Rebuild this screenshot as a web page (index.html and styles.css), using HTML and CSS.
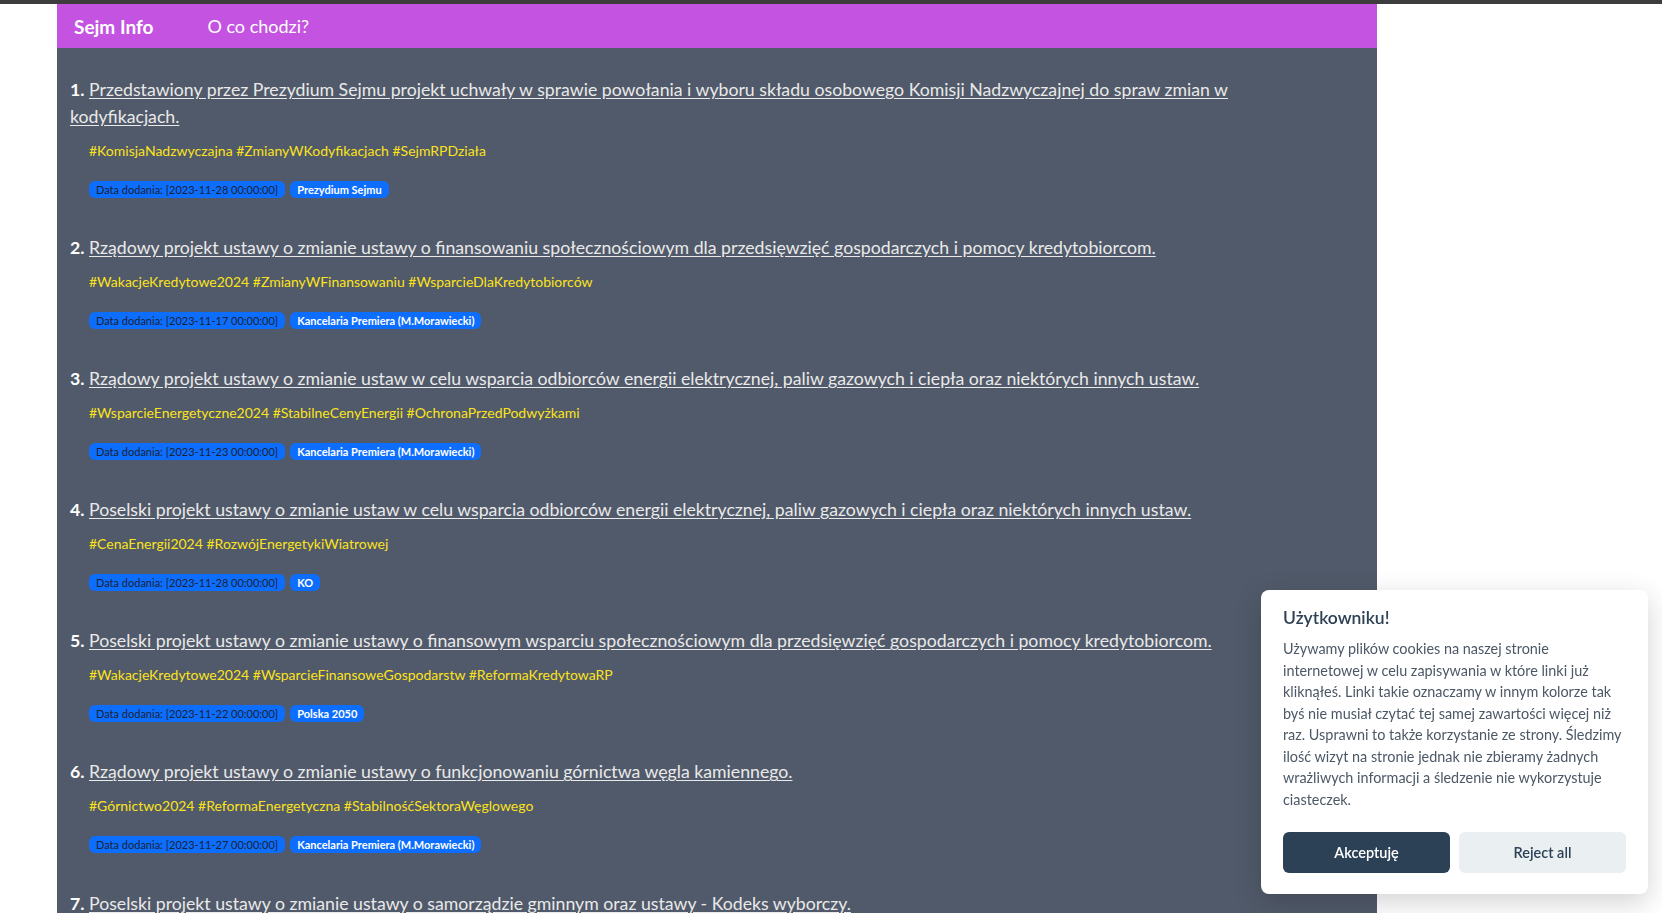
FILE: index.html
```html
<!DOCTYPE html>
<html lang="pl">
<head>
<meta charset="utf-8">
<title>Sejm Info</title>
<link rel="stylesheet" href="styles.css">
</head>
<body>
<div class="topline"></div>
<div class="page">
  <nav class="navbar">
    <a class="brand" href="#">Sejm Info</a>
    <a class="nav-link" href="#">O co chodzi?</a>
  </nav>
  <main class="list">
    <div class="item">
      <div class="title"><span class="num">1.</span> <a href="#">Przedstawiony przez Prezydium Sejmu projekt uchwały w sprawie powołania i wyboru składu osobowego Komisji Nadzwyczajnej do spraw zmian w kodyfikacjach.</a></div>
      <div class="tags">#KomisjaNadzwyczajna #ZmianyWKodyfikacjach #SejmRPDziała</div>
      <div class="badges"><span class="badge date">Data dodania: [2023-11-28 00:00:00]</span><span class="badge author">Prezydium Sejmu</span></div>
    </div>
    <div class="item">
      <div class="title"><span class="num">2.</span> <a href="#">Rządowy projekt ustawy o zmianie ustawy o finansowaniu społecznościowym dla przedsięwzięć gospodarczych i pomocy kredytobiorcom.</a></div>
      <div class="tags">#WakacjeKredytowe2024 #ZmianyWFinansowaniu #WsparcieDlaKredytobiorców</div>
      <div class="badges"><span class="badge date">Data dodania: [2023-11-17 00:00:00]</span><span class="badge author">Kancelaria Premiera (M.Morawiecki)</span></div>
    </div>
    <div class="item">
      <div class="title"><span class="num">3.</span> <a href="#">Rządowy projekt ustawy o zmianie ustaw w celu wsparcia odbiorców energii elektrycznej, paliw gazowych i ciepła oraz niektórych innych ustaw.</a></div>
      <div class="tags">#WsparcieEnergetyczne2024 #StabilneCenyEnergii #OchronaPrzedPodwyżkami</div>
      <div class="badges"><span class="badge date">Data dodania: [2023-11-23 00:00:00]</span><span class="badge author">Kancelaria Premiera (M.Morawiecki)</span></div>
    </div>
    <div class="item">
      <div class="title"><span class="num">4.</span> <a href="#">Poselski projekt ustawy o zmianie ustaw w celu wsparcia odbiorców energii elektrycznej, paliw gazowych i ciepła oraz niektórych innych ustaw.</a></div>
      <div class="tags">#CenaEnergii2024 #RozwójEnergetykiWiatrowej</div>
      <div class="badges"><span class="badge date">Data dodania: [2023-11-28 00:00:00]</span><span class="badge author">KO</span></div>
    </div>
    <div class="item">
      <div class="title"><span class="num">5.</span> <a href="#">Poselski projekt ustawy o zmianie ustawy o finansowym wsparciu społecznościowym dla przedsięwzięć gospodarczych i pomocy kredytobiorcom.</a></div>
      <div class="tags">#WakacjeKredytowe2024 #WsparcieFinansoweGospodarstw #ReformaKredytowaRP</div>
      <div class="badges"><span class="badge date">Data dodania: [2023-11-22 00:00:00]</span><span class="badge author">Polska 2050</span></div>
    </div>
    <div class="item">
      <div class="title"><span class="num">6.</span> <a href="#">Rządowy projekt ustawy o zmianie ustawy o funkcjonowaniu górnictwa węgla kamiennego.</a></div>
      <div class="tags">#Górnictwo2024 #ReformaEnergetyczna #StabilnośćSektoraWęglowego</div>
      <div class="badges"><span class="badge date">Data dodania: [2023-11-27 00:00:00]</span><span class="badge author">Kancelaria Premiera (M.Morawiecki)</span></div>
    </div>
    <div class="item">
      <div class="title"><span class="num">7.</span> <a href="#">Poselski projekt ustawy o zmianie ustawy o samorządzie gminnym oraz ustawy - Kodeks wyborczy.</a></div>
      <div class="tags">#SamorządGminny #KodeksWyborczy #ZmianyWPrawie</div>
      <div class="badges"><span class="badge date">Data dodania: [2023-11-28 00:00:00]</span><span class="badge author">PSL</span></div>
    </div>
  </main>
</div>

<div class="cookie">
  <div class="cookie-title">Użytkowniku!</div>
  <p class="cookie-desc">Używamy plików cookies na naszej stronie internetowej w celu zapisywania w które linki już kliknąłeś. Linki takie oznaczamy w innym kolorze tak byś nie musiał czytać tej samej zawartości więcej niż raz. Usprawni to także korzystanie ze strony. Śledzimy ilość wizyt na stronie jednak nie zbieramy żadnych wrażliwych informacji a śledzenie nie wykorzystuje ciasteczek.</p>
  <div class="cookie-buttons">
    <button class="btn btn-accept">Akceptuję</button>
    <button class="btn btn-reject">Reject all</button>
  </div>
</div>
</body>
</html>
```
FILE: styles.css
```css
html, body {
  margin: 0;
  padding: 0;
  background: #ffffff;
  font-family: Lato, "Noto Sans", sans-serif;
}

.topline {
  height: 4px;
  background: #3d3d3d;
}

.page {
  width: 1320px;
  margin-left: 57px;
  background: #515a6a;
  min-height: 909px;
}

.navbar {
  height: 44px;
  background: #c353e0;
  display: flex;
  align-items: center;
  padding-left: 17px;
}

.brand {
  color: #ffffff;
  font-weight: 700;
  font-size: 19px;
  text-decoration: none;
  margin-right: 54px;
}

.nav-link {
  color: #ffffff;
  font-size: 18px;
  text-decoration: none;
}

.list {
  padding: 28px 0 0 13px;
}

.item {
  max-width: 1230px;
  margin-bottom: 36.6px;
}

.title {
  font-size: 17.7px;
  line-height: 27px;
  color: #e9e9e9;
}

.num {
  font-weight: 700;
  color: #ffffff;
}

.title a {
  color: #e9e9e9;
  text-decoration: underline;
  text-underline-offset: 2px;
}

.tags {
  margin-top: 9.5px;
  padding-left: 19px;
  font-size: 14px;
  line-height: 21px;
  color: #fbe31c;
}

.badges {
  margin-top: 20px;
  padding-left: 19px;
  display: flex;
  gap: 5px;
}

.badge {
  height: 17px;
  line-height: 17px;
  padding: 0 7px;
  font-size: 11px;
  border-radius: 6px;
  background: #0d6efd;
  white-space: nowrap;
}

.badge.date {
  color: #1b2233;
}

.badge.author {
  color: #ffffff;
  font-weight: 700;
}

.cookie {
  position: fixed;
  right: 14px;
  bottom: 19px;
  width: 387px;
  box-sizing: border-box;
  padding: 16px 22px 21px;
  background: #ffffff;
  border-radius: 8px;
  box-shadow: 0 8px 28px rgba(0, 0, 0, 0.18);
}

.cookie-title {
  font-size: 17.5px;
  line-height: 24px;
  font-weight: 600;
  color: #2d4156;
}

.cookie-desc {
  margin: 8px 0 0;
  font-size: 14.4px;
  line-height: 21.5px;
  color: #4c5866;
}

.cookie-buttons {
  margin-top: 22px;
  display: flex;
  gap: 9px;
}

.btn {
  flex: 1;
  height: 41px;
  border: none;
  border-radius: 6px;
  font-family: Lato, "Noto Sans", sans-serif;
  font-size: 14.5px;
  font-weight: 600;
  cursor: pointer;
}

.btn-accept {
  background: #2d4156;
  color: #ffffff;
}

.btn-reject {
  background: #eaeff2;
  color: #2d4156;
}
```
